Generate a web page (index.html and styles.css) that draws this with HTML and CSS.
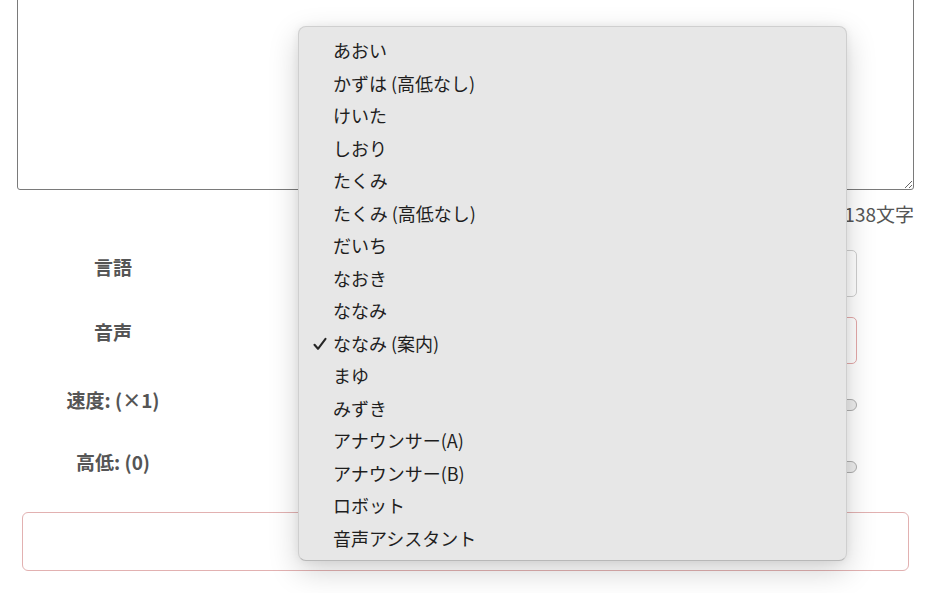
FILE: index.html
```html
<!DOCTYPE html>
<html lang="ja">
<head>
<meta charset="utf-8">
<title>音声合成</title>
<link rel="stylesheet" href="styles.css">
</head>
<body>
<main class="page">
  <textarea class="text-input" aria-label="テキスト"></textarea>
  <div class="count">138文字</div>
  <div class="form">
    <div class="row row-select">
      <label class="label">言語</label>
      <div class="control"><div class="select" aria-label="言語"></div></div>
    </div>
    <div class="row row-select">
      <label class="label">音声</label>
      <div class="control"><div class="select select-active" aria-label="音声"></div></div>
    </div>
    <div class="row row-slider">
      <label class="label">速度: (×1)</label>
      <div class="control"><div class="track"></div></div>
    </div>
    <div class="row row-slider">
      <label class="label">高低: (0)</label>
      <div class="control"><div class="track"></div></div>
    </div>
  </div>
  <button class="play" type="button" aria-label="再生"></button>
</main>

<ul class="menu">
  <li class="item">あおい</li>
  <li class="item">かずは (高低なし)</li>
  <li class="item">けいた</li>
  <li class="item">しおり</li>
  <li class="item">たくみ</li>
  <li class="item">たくみ (高低なし)</li>
  <li class="item">だいち</li>
  <li class="item">なおき</li>
  <li class="item">ななみ</li>
  <li class="item checked"><svg class="check" viewBox="0 0 14 14" width="14" height="14"><path d="M1.5 7.8 L5 11.8 L12.5 1.8" fill="none" stroke="#262626" stroke-width="2.1" stroke-linecap="round" stroke-linejoin="round"/></svg>ななみ (案内)</li>
  <li class="item">まゆ</li>
  <li class="item">みずき</li>
  <li class="item">アナウンサー(A)</li>
  <li class="item">アナウンサー(B)</li>
  <li class="item">ロボット</li>
  <li class="item">音声アシスタント</li>
</ul>
</body>
</html>
```
FILE: styles.css
```css
* { box-sizing: border-box; }
html, body {
  margin: 0;
  padding: 0;
  background: #fff;
  overflow: hidden;
}
body {
  font-family: "Noto Sans CJK JP", "Noto Sans", sans-serif;
  color: #555;
  height: 593px;
  position: relative;
}
.page {
  margin-top: -20px;
  padding: 0 16px 0 17px;
}
.text-input {
  display: block;
  width: 897px;
  height: 210px;
  border: 1px solid #7a7a7a;
  border-radius: 3px;
  resize: vertical;
  background: #fff;
  font: inherit;
}
.count {
  margin-top: 12px;
  text-align: right;
  font-size: 19px;
  line-height: 24px;
  color: #555;
}
.form {
  margin-top: 24px;
  display: flex;
  flex-direction: column;
}
.row {
  display: grid;
  grid-template-columns: 192px 547px;
  column-gap: 101px;
  align-items: start;
}
.label {
  text-align: center;
  font-size: 19px;
  line-height: 24px;
  font-weight: 700;
  color: #555;
}
.row-select { height: 47px; margin-bottom: 20px; }
.row-select .label { padding-top: 5px; }
.row-select:nth-child(2) { margin-bottom: 24px; }
.row-select:nth-child(2) .label { padding-top: 3px; }
.select {
  height: 47px;
  border: 1px solid #cfcfcf;
  border-radius: 5px;
  background: #fff;
}
.select-active { border-color: #e4a9a9; }
.row-slider { height: 62px; }
.row-slider .label { padding-top: 0; }
.track {
  margin-top: 11px;
  height: 12px;
  border: 1px solid #b0b0b0;
  border-radius: 6px;
  background: #eee;
}
.play {
  display: block;
  margin: 0 0 0 5px;
  width: 887px;
  height: 59px;
  border: 1px solid #e2b1b1;
  border-radius: 6px;
  background: #fff;
}
.menu {
  position: absolute;
  left: 298px;
  top: 26px;
  width: 549px;
  height: 535px;
  margin: 0;
  padding: 7px 0;
  list-style: none;
  background: #e7e7e7;
  border: 1px solid rgba(0, 0, 0, 0.1);
  border-bottom-color: rgba(0, 0, 0, 0.2);
  border-radius: 8px;
  box-shadow: 0 10px 30px rgba(0, 0, 0, 0.18), 0 0 8px rgba(0, 0, 0, 0.06);
}
.item {
  position: relative;
  height: 32.5px;
  line-height: 32.5px;
  padding-left: 34px;
  font-size: 18px;
  font-weight: 400;
  color: #1e1e1e;
  white-space: nowrap;
}
.check {
  position: absolute;
  left: 14px;
  top: 10px;
}
```
